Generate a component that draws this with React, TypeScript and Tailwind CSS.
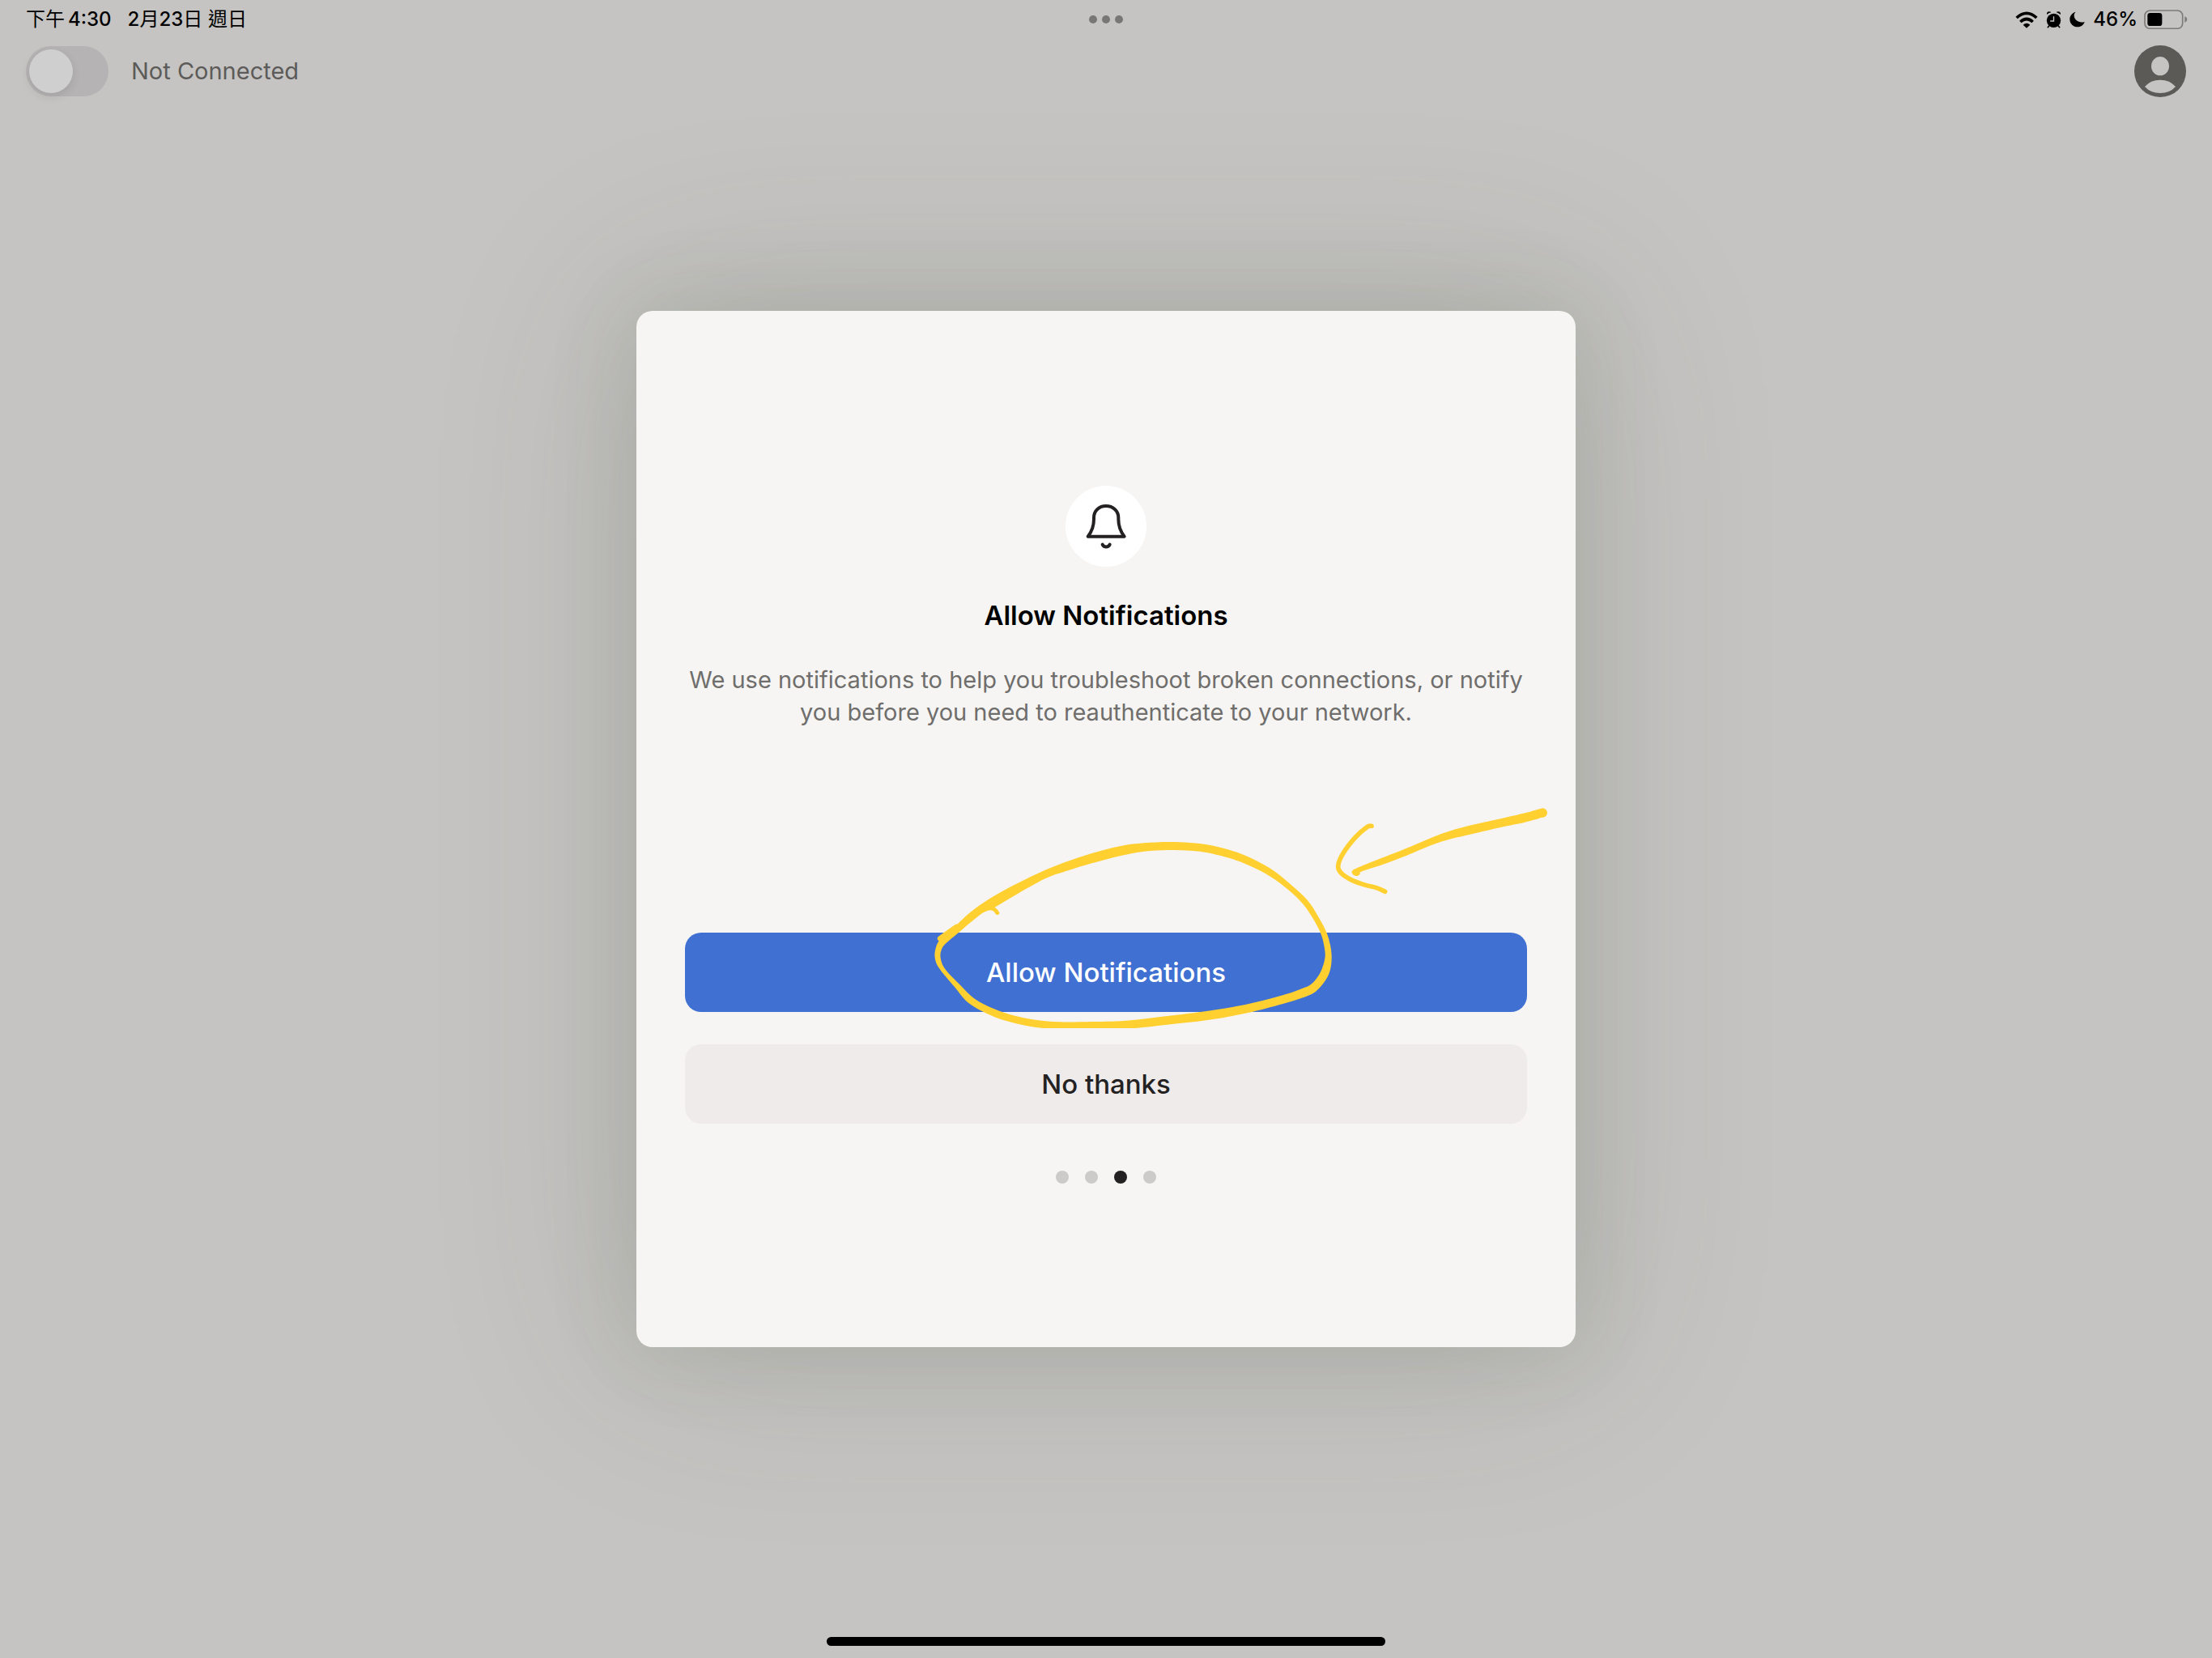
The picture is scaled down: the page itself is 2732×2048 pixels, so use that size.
import { useState } from "react";

type Point = [number, number];

// Catmull-Rom spline through the points, written as cubic Béziers.
function smooth(points: Point[], closed: boolean): string {
  const n = points.length;
  const at = (i: number): Point =>
    closed ? points[(i + n) % n] : points[Math.max(0, Math.min(n - 1, i))];
  let d = `M${points[0][0]} ${points[0][1]}`;
  const segments = closed ? n : n - 1;
  for (let i = 0; i < segments; i++) {
    const [p0, p1, p2, p3] = [at(i - 1), at(i), at(i + 1), at(i + 2)];
    d += `C${p1[0] + (p2[0] - p0[0]) / 6} ${p1[1] + (p2[1] - p0[1]) / 6} ${p2[0] - (p3[0] - p1[0]) / 6} ${p2[1] - (p3[1] - p1[1]) / 6} ${p2[0]} ${p2[1]}`;
  }
  return closed ? d + "Z" : d;
}

const RING_OUTER: Point[] = [
  [118, 478], [165, 434], [220, 380], [290, 328], [370, 280], [460, 233], [545, 196], [640, 162], [740, 135], [820, 124],
  [905, 120], [980, 123], [1060, 134], [1160, 166], [1255, 217], [1325, 275], [1385, 335], [1422, 395],
  [1455, 465], [1469, 540], [1460, 608], [1425, 663], [1385, 691], [1300, 720], [1180, 753], [1040, 780],
  [900, 797], [740, 815], [620, 819], [500, 813], [400, 798], [300, 767], [215, 718], [165, 657],
  [112, 588], [97, 548], [101, 510],
];

const RING_INNER: Point[] = [
  [480, 255], [370, 320], [304, 362], [270, 378], [232, 408], [180, 455], [135, 496], [119, 522], [117, 552], [132, 590],
  [180, 645], [240, 705], [330, 750], [430, 777], [530, 787], [640, 786], [740, 784], [860, 770],
  [1010, 751], [1170, 723], [1300, 688], [1365, 664], [1400, 646], [1430, 604], [1446, 550], [1443, 505],
  [1430, 455], [1395, 387], [1360, 338], [1305, 285], [1240, 237], [1150, 192], [1050, 162], [980, 152],
  [905, 150], [820, 155], [740, 171], [640, 199], [560, 225],
];

const ARROW_SHAFT: Point[] = [
  [790, 103], [700, 124], [570, 153], [480, 180], [400, 213], [330, 242], [250, 273], [165, 308],
  [149, 320], [155, 332], [170, 336], [180, 328], [184, 320], [260, 295], [340, 265], [430, 227],
  [500, 203], [570, 186], [700, 156], [790, 137], [858, 117], [864, 102], [852, 87],
];

const ARROW_HEAD: Point[] = [
  [222, 151], [205, 155], [160, 195], [115, 255], [98, 300], [112, 328], [150, 352], [200, 370], [240, 380], [272, 394],
];

function Annotation() {
  return (
    <svg
      className="pointer-events-none absolute left-[274px] -top-[182px] h-[300px] w-[820px]"
      viewBox="0 0 820 300"
      fill="#ffd02f"
      stroke="none"
      strokeLinecap="round"
      strokeLinejoin="round"
      aria-hidden="true"
    >
      <g transform="translate(0 30) scale(0.35714 0.33333)">
        <path fillRule="evenodd" d={smooth(RING_OUTER, true) + smooth(RING_INNER, true)} />
        <path d="M117 478 L172 436" fill="none" stroke="#ffd02f" strokeWidth="22" />
        <path d="M268 372 Q300 356 313 383" fill="none" stroke="#ffd02f" strokeWidth="14" />
      </g>
      <g transform="translate(500 0) scale(0.33333)">
        <path d={smooth(ARROW_SHAFT, true)} />
        <circle cx="856" cy="102" r="17" />
        <path d={smooth(ARROW_HEAD, false)} fill="none" stroke="#ffd02f" strokeWidth="17" />
      </g>
    </svg>
  );
}

function WifiIcon() {
  return (
    <svg className="h-[21px] w-[28px]" viewBox="117 40 84 63" fill="none" stroke="#000" aria-hidden="true">
      <path d="M122 64 Q159 30 196 64" strokeWidth="11" />
      <path d="M136 79 Q159 58 182 79" strokeWidth="11" />
      <path d="M159 102 L146 90 Q159 79 172 90 Z" fill="#000" stroke="none" />
    </svg>
  );
}

function AlarmIcon() {
  return (
    <svg className="h-[21px] w-[19px]" viewBox="229 38 57 63" fill="#000" strokeLinecap="round" aria-hidden="true">
      <circle cx="257.500" cy="72" r="26" />
      <path d="M232 50 Q231 40 240 39 Q246 39 248 42 Q239 44 232 50Z" />
      <path d="M283 50 Q284 40 275 39 Q269 39 267 42 Q276 44 283 50Z" />
      <path d="M240 92 L236 97 M275 92 L279 97" stroke="#000" strokeWidth="5" />
      <path d="M257.500 58 V74 H246" fill="none" stroke="#c5c4c2" strokeWidth="4" />
    </svg>
  );
}

function MoonIcon() {
  return (
    <svg className="h-[20px] w-[19px]" viewBox="320 41 57 60" aria-hidden="true">
      <path d="M343 43 C328 47 321 59 321 70 C321 87 334 99 350 99 C363 99 373 91 376 80 C356 87 337 72 337 57 C337 51 339 47 343 43Z" fill="#000" />
    </svg>
  );
}

function BatteryIcon() {
  return (
    <svg className="h-[24px] w-[54px]" viewBox="596 36 162 72" aria-hidden="true">
      <rect x="599" y="39" width="140" height="67" rx="19" fill="none" stroke="#7c7b79" strokeWidth="5" />
      <rect x="609" y="48" width="54" height="48" rx="10" fill="#000" />
      <path d="M747 60 Q756 64 756 72 Q756 80 747 84Z" fill="#7c7b79" />
    </svg>
  );
}

function AvatarIcon() {
  return (
    <svg className="size-16" viewBox="0 0 192 192" aria-hidden="true">
      <circle cx="96" cy="96" r="96" fill="#5b5a57" />
      <ellipse cx="96" cy="77" rx="33" ry="35" fill="#c5c4c2" />
      <path d="M39 153 Q60 128 96 128 Q132 128 153 153 Q132 177 96 177 Q60 177 39 153Z" fill="#c5c4c2" />
    </svg>
  );
}

function BellIcon() {
  return (
    <svg
      className="size-[100px]"
      viewBox="0 0 300 300"
      fill="none"
      stroke="#232122"
      strokeWidth="12"
      strokeLinecap="round"
      strokeLinejoin="round"
      aria-hidden="true"
    >
      <path d="M83 188 C99 168 105 146 105 124 V118 C105 92 125 75 150 75 C175 75 196 92 196 118 V124 C196 146 202 168 218 188 Z" />
      <path d="M137 218 C142 229 159 229 164 218" />
    </svg>
  );
}

function StatusBar() {
  return (
    <div className="grid h-12 grid-cols-3 items-center px-8 text-[24px] leading-8 font-medium text-black">
      <div className="flex gap-5">
        <span className="flex gap-1">
          <span className="font-normal">下午</span>
          <span>4:30</span>
        </span>
        <span>
          2<span className="font-normal">月</span>23<span className="font-normal">日 週日</span>
        </span>
      </div>
      <div className="flex justify-center gap-1.5">
        <span className="size-2.5 rounded-full bg-[#787775]" />
        <span className="size-2.5 rounded-full bg-[#787775]" />
        <span className="size-2.5 rounded-full bg-[#787775]" />
      </div>
      <div className="-mr-0.5 flex items-center justify-end gap-2">
        <div className="flex items-center gap-2.5">
          <WifiIcon />
          <AlarmIcon />
          <MoonIcon />
          <span>46%</span>
        </div>
        <BatteryIcon />
      </div>
    </div>
  );
}

const STEPS = [0, 1, 2, 3];

export default function App() {
  const [connected, setConnected] = useState(false);
  const currentStep = 2;

  return (
    <div className="relative flex min-h-screen flex-col overflow-hidden bg-[#c5c4c2] font-['Inter','Noto_Sans_CJK_TC',sans-serif]">
      <StatusBar />
      <header className="flex items-center justify-between px-8 pt-2">
        <label className="flex items-center gap-7">
          <span className="relative flex h-[62px] w-[102px] items-center rounded-full bg-[#b5b3b3] p-1">
            <input
              type="checkbox"
              role="switch"
              checked={connected}
              onChange={(e) => setConnected(e.target.checked)}
              className="peer absolute inset-0 size-full cursor-pointer appearance-none rounded-full"
            />
            <span className="pointer-events-none size-[54px] rounded-full bg-[#cfcfcf] shadow-[0_4px_12px_rgba(0,0,0,0.1)] peer-checked:ml-auto" />
          </span>
          <span className="text-[29px] leading-10 text-[#5c5b59]">Not Connected</span>
        </label>
        <button type="button" aria-label="Account">
          <AvatarIcon />
        </button>
      </header>

      <div className="absolute inset-x-0 top-12 bottom-12 flex items-center justify-center">
        <section
          role="dialog"
          aria-labelledby="dialog-title"
          className="flex w-full max-w-[1160px] flex-col items-center rounded-[20px] bg-[#f6f5f3] px-[60px] pt-[216px] pb-[202px] text-center shadow-[0_0_100px_20px_rgba(60,75,30,0.09),0_0_250px_10px_rgba(70,70,62,0.15)]"
        >
          <div className="rounded-full bg-white">
            <BellIcon />
          </div>
          <h1 id="dialog-title" className="mt-[38px] text-[33px] leading-[44px] font-semibold text-black">
            Allow Notifications
          </h1>
          <p className="mt-[38px] text-[29px] leading-10 text-[#6f6e6c]">
            We use notifications to help you troubleshoot broken connections, or notify you before you need to
            reauthenticate to your network.
          </p>
          <div className="relative mt-[252px] flex w-full flex-col gap-10 text-[33px] leading-[44px] font-medium">
            <button type="button" className="rounded-[20px] bg-[#3f70d2] py-[27px] text-white">
              Allow Notifications
            </button>
            <button type="button" className="rounded-[20px] bg-[#eeebea] py-[27px] text-[#232122]">
              No thanks
            </button>
            <Annotation />
          </div>
          <div className="mt-[58px] flex gap-5">
            {STEPS.map((step) => (
              <span
                key={step}
                className={step === currentStep ? "size-4 rounded-full bg-[#232122]" : "size-4 rounded-full bg-[#cccbc9]"}
              />
            ))}
          </div>
        </section>
      </div>

      <div className="mx-auto mt-auto mb-[15px] h-[11px] w-[690px] rounded-full bg-black" />
    </div>
  );
}
